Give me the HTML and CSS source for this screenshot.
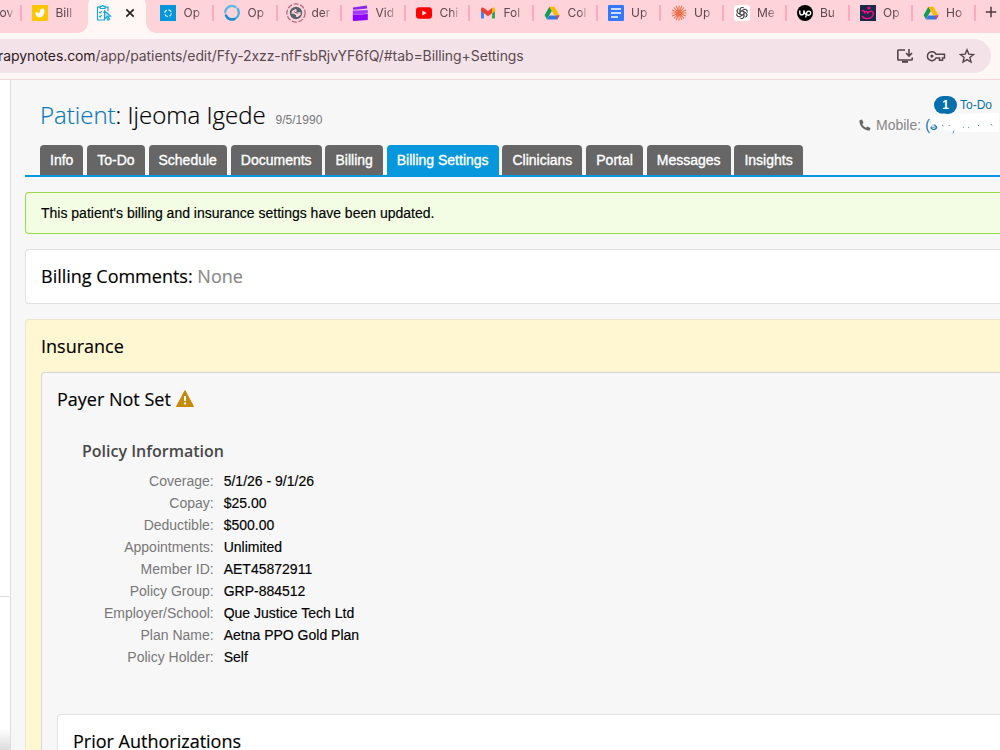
FILE: index.html
```html
<!DOCTYPE html>
<html lang="en">
<head>
<meta charset="utf-8">
<title>Patient: Ijeoma Igede</title>
<link rel="stylesheet" href="styles.css">
</head>
<body>
<div class="tabstrip">
  <div class="tab tab-cut"><span class="label">ov</span></div>
  <div class="tab tab-before-active"><svg class="icon" viewBox="0 0 16 16"><rect width="16" height="16" fill="#ffc500"/><path d="M3.500 7.800C4 6.400 5.600 6.900 6.200 8.200C7.500 8.200 8 7 8 5.800C8.300 4.200 9.800 3.300 11.700 3.600C13.500 7 12 12 7.600 12.500C5 12.500 3.300 10.500 3.500 7.800Z" fill="#fff"/></svg><span class="label">Bill</span></div>
  <div class="tab-active"><svg class="icon" viewBox="0 0 16 16" fill="none" stroke="#1ba6dc" stroke-width="1.200"><path d="M4 2.200H1.500V15H9M9 2.200h3V6M4.300 1.300h1.200L6.600.4l1.200.9h1.300v2.200H4.300zM3.200 7l1 1 1.500-2M7.200 7h2M3.200 11l1 1 1.500-2"/><path d="M8.500 5.800l6 5.200-2.700.4 1.700 3-1.400.8-1.700-3-1.900 2z" fill="#a7dcf2"/></svg><svg class="close" viewBox="0 0 10 10"><path d="M1.300 1.300l7.400 7.400M8.700 1.300L1.300 8.700" stroke="#29211f" stroke-width="1.700"/></svg></div>
  <div class="tab"><svg class="icon" viewBox="0 0 16 16"><rect width="16" height="16" fill="#0795dc"/><circle cx="8" cy="8.200" r="3.300" fill="none" stroke="#d8f1ff" stroke-width="1.200" stroke-dasharray="3.500 1.700"/></svg><span class="label">Op</span></div>
  <div class="tab"><svg class="icon" viewBox="0 0 16 16" fill="none" stroke-linecap="round"><path d="M13.700 4A6.500 6.500 0 0 1 12 13" stroke="#43b5e5" stroke-width="2.300"/><path d="M10.500 14A6.500 6.500 0 0 1 2 10.500" stroke="#168dcc" stroke-width="2.500"/><path d="M1.200 7.500A6.600 6.600 0 0 1 11.500 2.200" stroke="#55b8e6" stroke-width="2.200"/></svg><span class="label">Op</span></div>
  <div class="tab"><svg class="icon icon-loading" viewBox="0 0 20 20"><circle cx="10" cy="10" r="9.100" fill="none" stroke="#b06a80" stroke-width="1.300" stroke-dasharray="5 1.700"/><circle cx="10" cy="10" r="6.200" fill="#59626a"/><path d="M6 8l3.500-2 1.500 1-1 1.500 2 1 2.500-.5.300 2.500-3 2.500-1.800-.3V12L7 10.500 5.500 11z" fill="#ffd3da"/><path d="M8.200 8.800l4 1.700" stroke="#59626a"/></svg><span class="label">der</span></div>
  <div class="tab"><svg class="icon" viewBox="0 0 16 16"><path d="M.8 2.600L14.800.5l.5 3-14 1.300z" fill="#8b22ed"/><path d="M.8 5.500L15.800 5v3.500L.8 10z" fill="#a43cff"/><path d="M.8 10l15-1v6l-14 1a1 1 0 0 1-1-1z" fill="#9000ff"/></svg><span class="label">Vid</span></div>
  <div class="tab"><svg class="icon" viewBox="0 0 16 16"><rect y="2.300" width="16" height="11.500" rx="3" fill="#f00"/><path d="M6.400 5.600v5l4.200-2.500z" fill="#fff"/></svg><span class="label">Chi</span></div>
  <div class="tab"><svg class="icon" viewBox="0 0 16 16"><path d="M1 4v9.400h3V7z" fill="#4285f4"/><path d="M12 7v6.400h3V4z" fill="#34a853"/><path d="M1 4c0-1.600 1.700-2 3-1l4 3 4-3v5.300l-4 3-4-3-3-2z" fill="#ea4335"/><path d="M12 3v5.500l3-2.300V4c0-1.600-1.700-2-3-1z" fill="#fbbc04"/></svg><span class="label">Fol</span></div>
  <div class="tab"><svg class="icon" viewBox="0 0 16 16"><use href="#drive"/></svg><span class="label">Col</span></div>
  <div class="tab narrow"><svg class="icon" viewBox="0 0 16 16"><rect width="16" height="16" rx="1.200" fill="#3478ff"/><path d="M3 4h10M3 8h10M3 12h7" stroke="#fff" stroke-width="1.700"/></svg><span class="label">Up</span></div>
  <div class="tab narrow"><svg class="icon" viewBox="0 0 16 16"><path d="M8 .5v15M.5 8h15M3 2.500l10 11M13 2.500l-10 11M5.200.900l5.600 14M10.800.9L5.200 15M1 5l14 6M1 11l14-6" stroke="#e9704b" stroke-width="1.100"/></svg><span class="label">Up</span></div>
  <div class="tab narrow"><svg class="icon" viewBox="0 0 16 16" fill="none" stroke="#454545" stroke-width=".9"><rect width="16" height="16" rx="3" fill="#fff" stroke="none"/><g transform="translate(8 8)"><path id="petal" d="M-2 1V-3.200a2.300 2.300 0 0 1 4.200-1.400M-2-1.100L1.800-3.300a2.400 2.400 0 0 1 3.500 1.600"/><use href="#petal" transform="rotate(60)"/><use href="#petal" transform="rotate(120)"/><use href="#petal" transform="rotate(180)"/><use href="#petal" transform="rotate(240)"/><use href="#petal" transform="rotate(300)"/></g></svg><span class="label">Me</span></div>
  <div class="tab narrow"><svg class="icon" viewBox="0 0 16 16"><circle cx="8" cy="8" r="8" fill="#000"/><path d="M2.800 5.500v2.300c0 2.800 4 2.800 4 0V5.500c.5 2.500 1.500 3.700 2.600 4.500M8.700 12.300l.8-4c.5-3 4.500-2.700 4.200 0-.2 2.300-3 2.500-4.500.5" fill="none" stroke="#fff" stroke-width="1.400"/></svg><span class="label">Bu</span></div>
  <div class="tab narrow"><svg class="icon" viewBox="0 0 16 16"><rect width="16" height="16" fill="#1c2849"/><circle cx="9" cy="3" r="1.600" fill="#f40c86"/><path d="M1.800 6.200c1.800-1.400 3.200-.5 2.700 2.300M4.500 8c1.800-2.500 4-1.500 3 1M7.700 8c2.800-3 5.800-1.600 5.600.8C13 12 10 13.800 6.500 13.500 4.500 13.300 2.500 12.500 2.200 11" fill="none" stroke="#f40c86" stroke-width="1.500"/></svg><span class="label">Op</span></div>
  <div class="tab narrow"><svg class="icon" viewBox="0 0 16 16"><g id="drive"><path d="M5.300 1.800L.6 10.300l2.300 4L8 5.500z" fill="#0f9d58"/><path d="M5.300 1.800h5.200l5 8.700h-5z" fill="#ffba00"/><path d="M5.300 10.500h10.200l-2.400 3.900H2.900z" fill="#3777e3"/><path d="M12.200 10.500h3.300l-2.400 3.900z" fill="#ea4335"/></g></svg><span class="label">Ho</span></div>
  <svg class="newtab" viewBox="0 0 12 12"><path d="M6 .8v10.400M.8 6h10.400" stroke="#4b3d41" stroke-width="1.500"/></svg>
</div>
<div class="toolbar">
  <div class="omnibox">
    <div class="url"><span class="host">rapynotes.com</span>/app/patients/edit/Ffy-2xzz-nfFsbRjvYF6fQ/#tab=Billing+Settings</div>
    <div class="actions">
      <svg class="act" viewBox="0 0 18 16" fill="none" stroke="#51464a" stroke-width="1.600"><path d="M9 2H2.500Q1.800 2 1.800 2.700v8.600q0 .7.700.7h13q.7 0 .7-.7V9.500M13 1v6.500M10 5l3 3 3-3"/><path d="M6 13.800h6" stroke-width="2"/></svg>
      <svg class="act act-key" viewBox="0 0 20 16" fill="none" stroke="#51464a" stroke-width="1.500"><path d="M10 6.300A4.500 4.500 0 1 0 10 10h3.500v2.200h3V10h2V6.300z"/><circle cx="5.900" cy="8.100" r="1.600" fill="#51464a" stroke="none"/></svg>
      <svg class="act act-star" viewBox="0 0 16 16"><path d="M8 1.800l1.800 4.300 4.700.4-3.600 3 1.100 4.600L8 11.600l-4 2.500 1.100-4.600-3.600-3 4.700-.4z" fill="none" stroke="#51464a" stroke-width="1.400"/></svg>
    </div>
  </div>
</div>
<div class="page">
  <div class="sidebar"><div class="side-top"></div><div class="side-bottom"></div></div>
  <main class="main">
    <header class="header">
      <h1 class="title"><span class="title-link">Patient</span>: Ijeoma Igede</h1>
      <span class="dob">9/5/1990</span>
      <div class="contact">
        <div class="todo"><span class="badge">1</span><a class="link">To-Do</a></div>
        <div class="phone"><svg class="phone-icon" viewBox="0 0 12 12"><path d="M.5 1.300L3 .5 4.500 3.700 3.200 5C4 6.700 5.200 8 7 8.800l1.300-1.400 3.200 1.500-.7 2.500C5 12 0 7 .5 1.300z" fill="#666"/></svg><span class="phone-label">Mobile:</span><span class="number">(3<svg class="smudge" viewBox="0 0 74 20"><path d="M6 5Q12-3 23-1L74-2V17L31 17Q20 15 14 13L10 9.500L6 10Z" fill="#fff"/><path d="M6 11.500l2 1 3-1M17 10l1.500 1M24 10l.5 1M29 15.500l-1 3M38 12l1 .7M43 12l1.200 1M53 10l1 1M66 9l1 1.500" stroke="#4a9bc8" fill="none"/></svg></span></div>
      </div>
    </header>
    <nav class="nav">
      <a class="nav-tab">Info</a><a class="nav-tab">To-Do</a><a class="nav-tab">Schedule</a><a class="nav-tab">Documents</a><a class="nav-tab">Billing</a><a class="nav-tab current">Billing Settings</a><a class="nav-tab">Clinicians</a><a class="nav-tab">Portal</a><a class="nav-tab">Messages</a><a class="nav-tab">Insights</a>
    </nav>
    <div class="alert">This patient's billing and insurance settings have been updated.</div>
    <section class="card comments"><h2 class="heading">Billing Comments: <span class="none">None</span></h2></section>
    <section class="card insurance">
      <h2 class="heading">Insurance</h2>
      <div class="card payer">
        <h2 class="heading payer-heading">Payer Not Set<svg class="warn" viewBox="0 0 18 17"><path d="M9 .6L17.500 16.500H.5z" fill="#c68a08" stroke="#c68a08" stroke-linejoin="round"/><path d="M9 6v5" stroke="#fff" stroke-width="2"/><circle cx="9" cy="13.400" r="1.200" fill="#fff"/></svg></h2>
        <h3 class="subheading">Policy Information</h3>
        <dl class="fields">
          <dt>Coverage:</dt><dd>5/1/26 - 9/1/26</dd>
          <dt>Copay:</dt><dd>$25.00</dd>
          <dt>Deductible:</dt><dd>$500.00</dd>
          <dt>Appointments:</dt><dd>Unlimited</dd>
          <dt>Member ID:</dt><dd>AET45872911</dd>
          <dt>Policy Group:</dt><dd>GRP-884512</dd>
          <dt>Employer/School:</dt><dd>Que Justice Tech Ltd</dd>
          <dt>Plan Name:</dt><dd>Aetna PPO Gold Plan</dd>
          <dt>Policy Holder:</dt><dd>Self</dd>
        </dl>
        <div class="card prior"><h2 class="heading">Prior Authorizations</h2></div>
      </div>
    </section>
  </main>
</div>
</body>
</html>
```
FILE: styles.css
```css
* { box-sizing: border-box; }
body { margin: 0; height: 750px; overflow: hidden; display: flex; flex-direction: column; background: #f7f7f7; color: #000; font: 14px/22px "Liberation Sans", Arial, sans-serif; }
h1, h2, h3, dl, dd { margin: 0; font-weight: 400; }
svg { flex: none; display: block; }

.tabstrip { flex: none; display: flex; height: 33px; background: #ffd3da; overflow: hidden; font: 12px/26px Inter, sans-serif; color: #5b474e; }
.tab { flex: none; position: relative; width: 64px; height: 26px; padding-left: 10px; display: flex; align-items: center; gap: 8px; }
.tab::after { content: ""; position: absolute; right: 0; top: 5px; width: 2px; height: 16px; background: #ffa9bc; }
.tab.narrow { width: 63px; }
.tab.narrow .icon { margin-left: -.5px; }
.tab-cut { width: 22px; padding-left: 0; }
.tab-cut .label { width: 15px; }
.tab-before-active { width: 66px; }
.tab-before-active::after { display: none; }
.icon { width: 16px; height: 16px; }
.icon-loading { width: 20px; height: 20px; margin: 0 -2px; }
.label { width: 22px; margin-left: -.5px; overflow: hidden; white-space: nowrap; -webkit-mask-image: linear-gradient(90deg, #000 50%, transparent 97%); mask-image: linear-gradient(90deg, #000 50%, transparent 97%); }
.tab-active { flex: none; position: relative; width: 58px; height: 37px; margin: -4px 4px 0 0; padding: 9px 0 0 8px; display: flex; gap: 14px; background: #fff7f5; border-radius: 9px 9px 0 0; }
.tab-active::before, .tab-active::after { content: ""; position: absolute; bottom: 0; width: 10px; height: 10px; }
.tab-active::before { left: -10px; background: radial-gradient(circle at 0 0, transparent 9.5px, #fff7f5 10px); }
.tab-active::after { right: -10px; background: radial-gradient(circle at 100% 0, transparent 9.5px, #fff7f5 10px); }
.close { width: 10px; height: 10px; margin: 3px 0 0 -1px; }
.newtab { width: 12px; height: 12px; margin: 6px 0 0 9px; }

.toolbar { flex: none; height: 47px; padding: 6px 9px 0 0; background: #fff7f5; border-bottom: 1px solid #f7d7dc; }
.omnibox { height: 34px; background: #f3e2e8; border-radius: 0 17px 17px 0; display: flex; justify-content: space-between; align-items: center; }
.url { margin-left: -2px; font: 14px/34px Inter, sans-serif; letter-spacing: -.085px; color: #5b4b50; white-space: nowrap; }
.host { color: #2c2023; }
.actions { display: flex; align-items: center; gap: 13px; padding-right: 16px; }
.act { width: 18px; height: 16px; margin-left: -1px; }
.act-key { width: 20px; }
.act-star { width: 16px; margin-left: 0; }

.page { flex: 1; min-height: 0; display: flex; }
.sidebar { flex: none; width: 11px; background: #fff; border-right: 1px solid #dedede; display: flex; flex-direction: column; }
.side-top { height: 517px; border-bottom: 1px solid #dedede; }
.side-bottom { flex: 1; background: linear-gradient(#fff 86%, #ddd); }
.main { flex: 1; min-width: 0; padding-left: 14px; overflow: hidden; }
.header { height: 65px; padding-left: 15px; display: flex; align-items: flex-start; }
.title { font: 300 24px/34px "Open Sans", sans-serif; margin-top: 18px; white-space: nowrap; -webkit-text-stroke: .2px; }
.title-link { color: #0e79b4; }
.dob { margin: 31px 0 0 10px; font-size: 12px; line-height: 18px; color: #777; }
.contact { margin-left: auto; margin-top: 15px; width: 141px; }
.todo { display: flex; align-items: center; height: 20px; padding-left: 75px; gap: 3px; }
.badge { width: 23px; height: 18px; border-radius: 9px; background: #0770ac; color: #fff; font: bold 12px/18px "Liberation Sans", sans-serif; text-align: center; }
.link { color: #0770ac; font-size: 12px; }
.phone { display: flex; align-items: center; height: 20px; white-space: nowrap; }
.phone-icon { width: 12px; height: 12px; margin-right: 5px; }
.phone-label { color: #888; }
.number { position: relative; color: #0770ac; margin-left: 4px; }
.smudge { position: absolute; left: 0; top: 1px; width: 74px; height: 20px; overflow: visible; }

.nav { display: flex; gap: 3.9px; height: 32px; padding-left: 15px; border-bottom: 2px solid #0797dd; }
.nav-tab { padding: 0 10px; height: 30px; line-height: 30px; background: #666; color: #fff; border-radius: 4px 4px 0 0; white-space: nowrap; -webkit-text-stroke: .35px #fff; }
.current { background: #0797dd; }
.alert { margin-top: 15px; height: 42px; padding-left: 15px; line-height: 40px; border: 1px solid #99dc4b; border-right: 0; border-radius: 4px 0 0 4px; background: #f3fde3; -webkit-text-stroke: .15px; }
.card { border: 1px solid #e2e2e2; border-right: 0; border-radius: 4px 0 0 4px; }
.heading { font: 18px/26px "Open Sans", sans-serif; white-space: nowrap; -webkit-text-stroke: .15px; }
.comments { margin-top: 15px; height: 55px; padding: 13px 15px; background: #fff; }
.none { color: #888; }
.insurance { margin-top: 15px; height: 600px; padding: 13px 0 0 15px; background: #fff7d1; border-color: #e9e5cf; }
.payer { margin-top: 13px; height: 600px; padding: 13px 0 0 15px; background: #f7f7f7; border-color: #d6d6d6; }
.payer-heading { display: flex; align-items: center; gap: 5px; }
.warn { width: 18px; height: 17px; margin-top: -2px; }
.subheading { margin: 27px 0 7px 25px; font: 600 16px/24px "Open Sans", sans-serif; color: #484848; }
.fields { display: grid; grid-template-columns: 156.700px auto; column-gap: 10px; grid-auto-rows: 22px; line-height: 22px; }
.fields dt { text-align: right; color: #777; }
.fields dd { -webkit-text-stroke: .15px; }
.prior { margin-top: 46px; height: 100px; padding: 13px 15px; background: #fff; }
```
